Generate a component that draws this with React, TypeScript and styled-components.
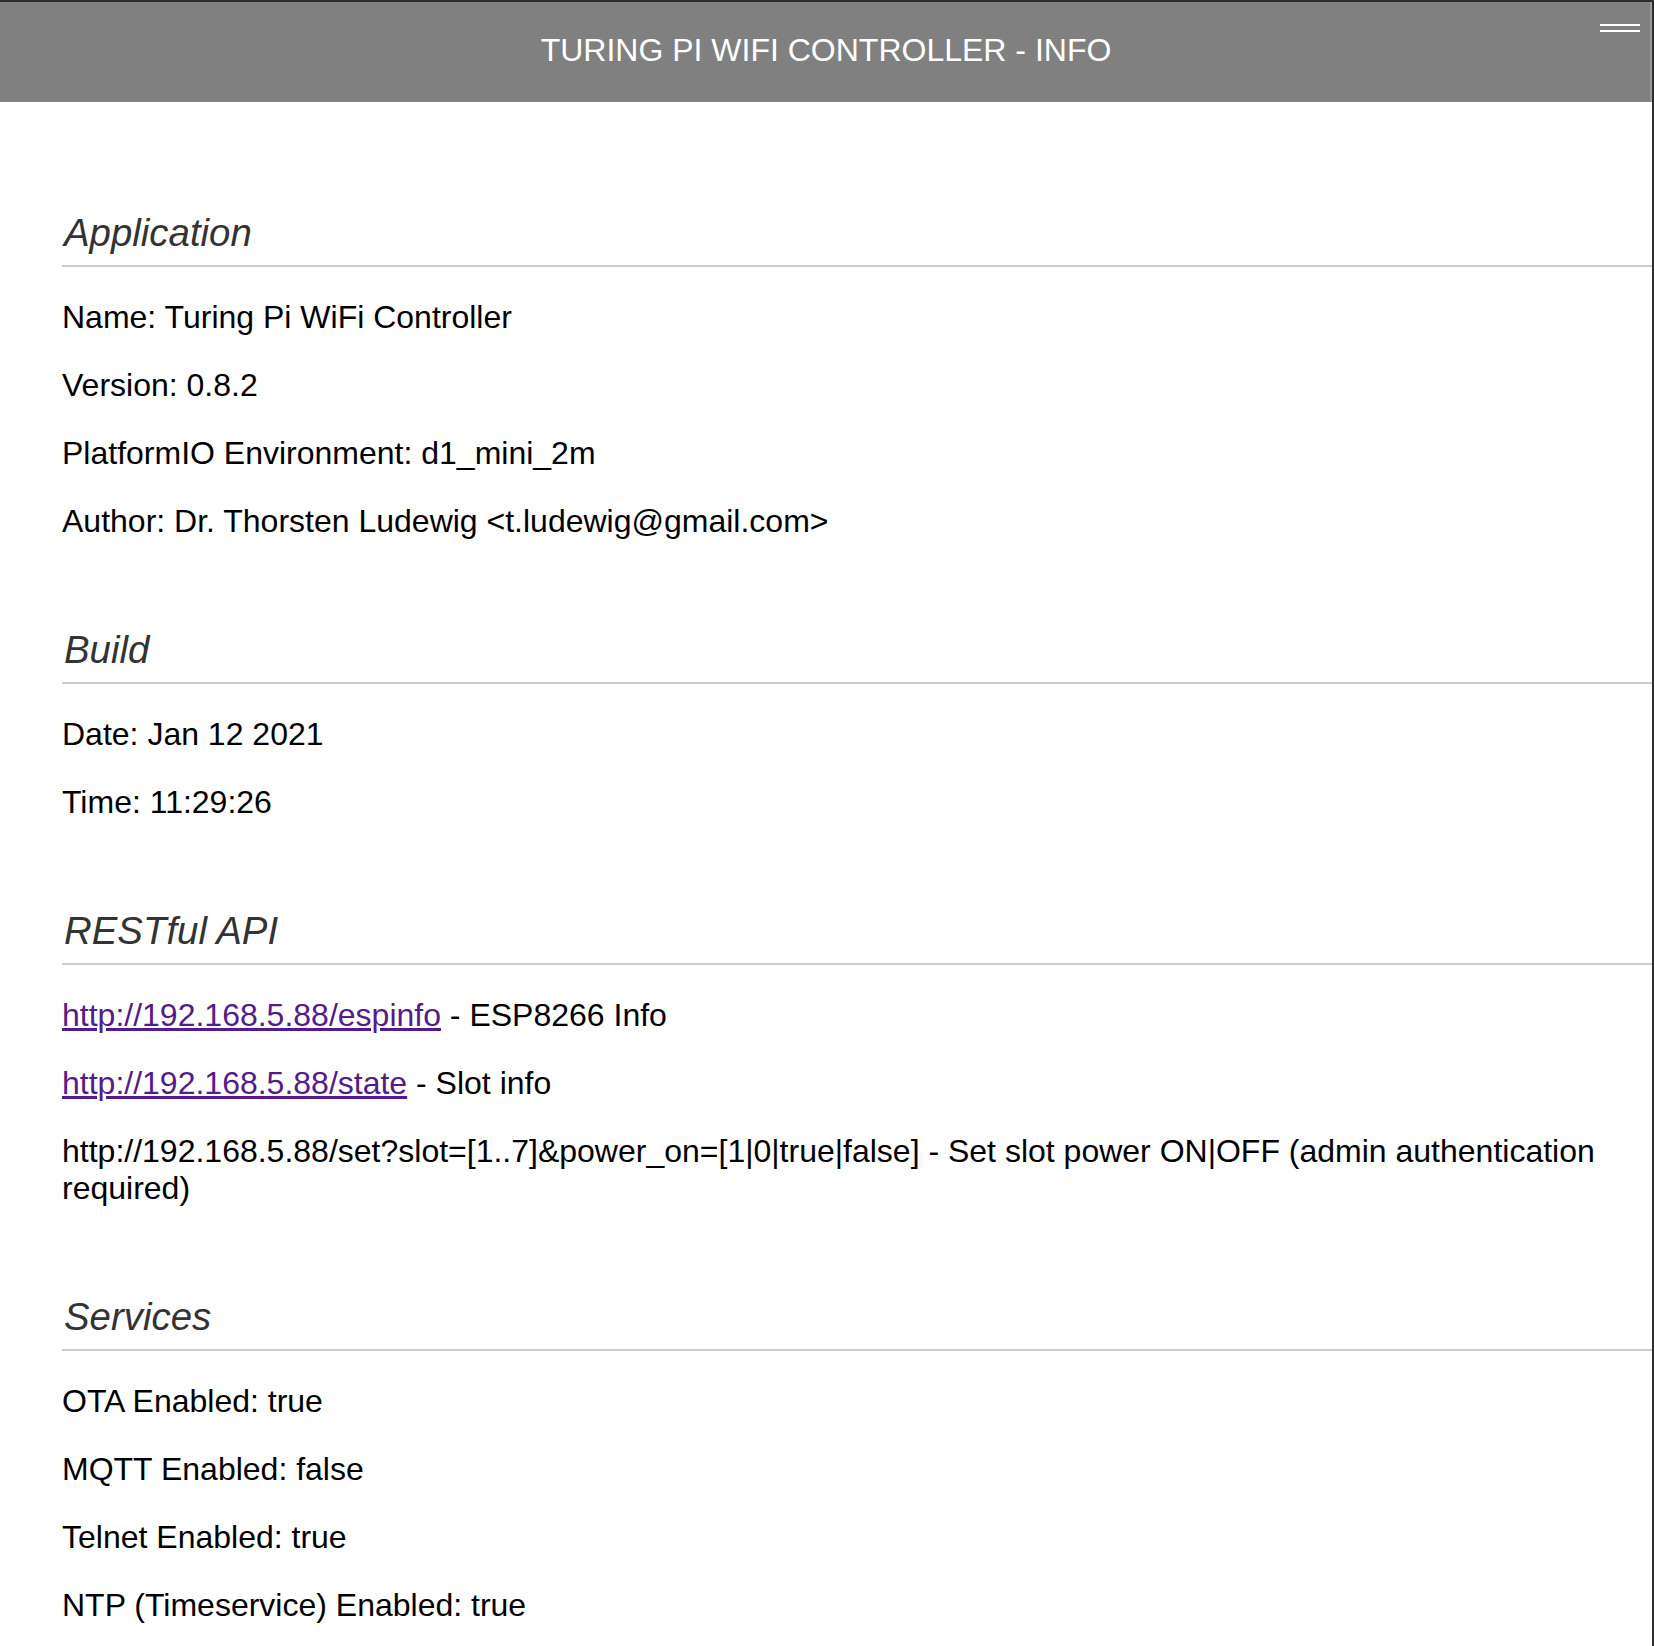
import React from "react";
import styled, { createGlobalStyle } from "styled-components";

type Row = { text?: string; href?: string; note?: string };
type Section = { title: string; rows: Row[] };

const HOST = "http://192.168.5.88";

const sections: Section[] = [
  {
    title: "Application",
    rows: [
      { text: "Name: Turing Pi WiFi Controller" },
      { text: "Version: 0.8.2" },
      { text: "PlatformIO Environment: d1_mini_2m" },
      { text: "Author: Dr. Thorsten Ludewig <t.ludewig@gmail.com>" },
    ],
  },
  {
    title: "Build",
    rows: [{ text: "Date: Jan 12 2021" }, { text: "Time: 11:29:26" }],
  },
  {
    title: "RESTful API",
    rows: [
      { href: `${HOST}/espinfo`, note: " - ESP8266 Info" },
      { href: `${HOST}/state`, note: " - Slot info" },
      {
        text: `${HOST}/set?slot=[1..7]&power_on=[1|0|true|false] - Set slot power ON|OFF (admin authentication required)`,
      },
    ],
  },
  {
    title: "Services",
    rows: [
      { text: "OTA Enabled: true" },
      { text: "MQTT Enabled: false" },
      { text: "Telnet Enabled: true" },
      { text: "NTP (Timeservice) Enabled: true" },
    ],
  },
];

const App = () => {
  return (
    <>
      <GlobalStyle />
      <Frame>
        <Header>
          <Title>TURING PI WIFI CONTROLLER - INFO</Title>
          <MenuButton aria-label="menu">
            <MenuBar />
            <MenuBar />
          </MenuButton>
        </Header>
        <Content>
          {sections.map((section) => (
            <InfoSection key={section.title}>
              <SectionTitle>{section.title}</SectionTitle>
              <Divider />
              <RowList>
                {section.rows.map((row, i) => (
                  <InfoRow key={i}>
                    {row.href ? (
                      <>
                        <ApiLink href={row.href}>{row.href}</ApiLink>
                        {row.note}
                      </>
                    ) : (
                      row.text
                    )}
                  </InfoRow>
                ))}
              </RowList>
            </InfoSection>
          ))}
        </Content>
      </Frame>
    </>
  );
};

// Estilos
const GlobalStyle = createGlobalStyle`
  html, body {
    margin: 0;
    padding: 0;
    background: #ffffff;
  }

  body {
    font-family: "Liberation Sans", Arial, Helvetica, sans-serif;
  }

  * {
    box-sizing: border-box;
  }
`;

const Frame = styled.div`
  min-height: 100vh;
  background: #ffffff;
  border-top: 2px solid #2e2e2e;
  border-right: 2px solid #2e2e2e;
  display: flex;
  flex-direction: column;
`;

const Header = styled.header`
  position: relative;
  height: 100px;
  background: #808080;
  box-shadow: inset -2px 0 0 #9a9a9a;
  display: flex;
  align-items: center;
  justify-content: center;
  padding-bottom: 3px;
`;

const Title = styled.h1`
  margin: 0;
  color: #ffffff;
  font-size: 32px;
  font-weight: normal;
  line-height: 1.15;
`;

const MenuButton = styled.div`
  position: absolute;
  top: 22px;
  right: 12px;
  width: 40px;
  display: flex;
  flex-direction: column;
  gap: 4px;
  cursor: pointer;
`;

const MenuBar = styled.span`
  display: block;
  height: 2px;
  background: #ffffff;
`;

const Content = styled.main`
  padding: 109px 0 40px 62px;
  display: flex;
  flex-direction: column;
  gap: 88.6px;
`;

const InfoSection = styled.section`
  display: flex;
  flex-direction: column;
`;

const SectionTitle = styled.h2`
  margin: 0 0 10px;
  padding-left: 2px;
  font-size: 38.4px;
  line-height: 44px;
  font-style: italic;
  font-weight: normal;
  color: #333333;
`;

const Divider = styled.hr`
  margin: 0;
  height: 2px;
  border: none;
  background: #cccccc;
`;

const RowList = styled.div`
  margin-top: 31.5px;
  display: flex;
  flex-direction: column;
  gap: 31.3px;
`;

const InfoRow = styled.p`
  margin: 0;
  font-size: 32px;
  line-height: 1.15;
  color: #000000;
`;

const ApiLink = styled.a`
  color: #551a8b;
  text-decoration: underline;
`;

export default App;
